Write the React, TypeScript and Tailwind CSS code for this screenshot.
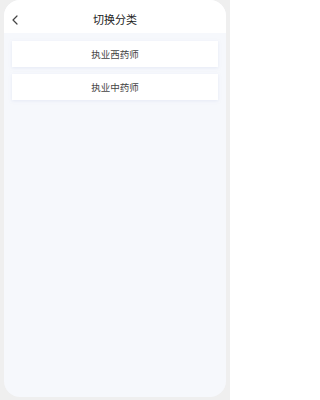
import { ChevronLeft } from 'lucide-react'

const CATEGORIES = ['执业西药师', '执业中药师']

export default function App() {
  return (
    <div
      className="h-[400px] w-[230px] bg-[#efefef] px-[4px] pb-[3px]"
      style={{ fontFamily: '"Noto Sans CJK SC", "Noto Sans", sans-serif' }}
    >
      <div className="flex h-full flex-col overflow-hidden rounded-[16px] bg-[#f6f8fc]">
        <header className="relative flex h-[33px] shrink-0 items-center justify-center bg-white">
          <ChevronLeft className="absolute left-[3px] top-[12px] h-[16px] w-[16px] text-[#444]" strokeWidth={1.8} />
          <h1 className="pt-[6px] text-[11px] font-normal text-[#222]">切换分类</h1>
        </header>
        <div className="flex flex-col gap-[7px] px-[8px] pt-[8px]">
          {CATEGORIES.map(name => (
            <div
              key={name}
              className="flex h-[26px] items-center justify-center bg-white text-[9.5px] text-[#444] shadow-[0_1px_3px_rgba(200,210,235,0.35)]"
            >
              {name}
            </div>
          ))}
        </div>
      </div>
    </div>
  )
}
